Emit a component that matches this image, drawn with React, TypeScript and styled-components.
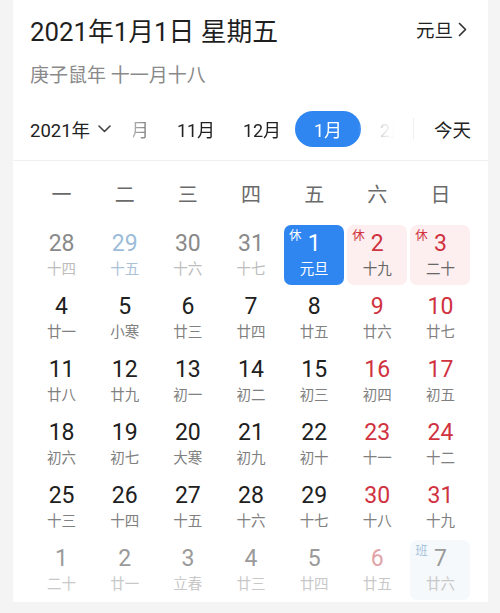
import React from "react";
import styled, { createGlobalStyle } from "styled-components";

const Global = createGlobalStyle`
  html, body { margin: 0; padding: 0; background: #f4f4f4; }
  body { font-family: "Roboto", "Noto Sans CJK SC", "Noto Sans", sans-serif; -webkit-font-smoothing: antialiased; }
`;

const Page = styled.div`
  width: 500px;
  height: 613px;
  overflow: hidden;
  background: #f4f4f4;
  padding: 0 12px 0 13px;
  box-sizing: border-box;
`;

const Card = styled.div`
  background: #ffffff;
  display: flex;
  flex-direction: column;
`;

const Header = styled.div`
  display: flex;
  flex-direction: column;
  padding: 0 17px 11px 17px;
  border-bottom: 1px solid #f0f0f0;
`;

const TitleRow = styled.div`
  height: 58px;
  display: flex;
  align-items: center;
  justify-content: space-between;
`;

const Title = styled.div`
  font-size: 25.8px;
  color: #1f1f1f;
`;

const Holiday = styled.div`
  display: flex;
  align-items: center;
  gap: 5px;
  font-size: 18.5px;
  color: #222;
  margin-right: 4px;
`;

const Sub = styled.div`
  height: 30px;
  display: flex;
  align-items: center;
  font-size: 19px;
  color: #8a8a8a;
`;

const MonthRow = styled.div`
  margin-top: 21px;
  height: 40px;
  display: flex;
  align-items: center;
`;

const YearPick = styled.div`
  display: flex;
  align-items: center;
  gap: 8px;
  font-size: 18.5px;
  color: #222;
  width: 103px;
  flex: none;
`;

const Strip = styled.div`
  width: 262px;
  height: 40px;
  overflow: hidden;
  flex: none;
  -webkit-mask-image: linear-gradient(to right, rgba(0,0,0,0.35) 0px, #000 40px, #000 225px, rgba(0,0,0,0.15) 250px, transparent 262px);
  mask-image: linear-gradient(to right, rgba(0,0,0,0.35) 0px, #000 40px, #000 225px, rgba(0,0,0,0.15) 250px, transparent 262px);
`;

const StripInner = styled.div`
  display: flex;
  margin-left: -36px;
  height: 40px;
`;

const MonthItem = styled.div<{ $active?: boolean }>`
  flex: none;
  width: 66px;
  height: 36px;
  margin-top: 2px;
  border-radius: 18px;
  display: flex;
  align-items: center;
  justify-content: center;
  font-size: 18px;
  color: ${(p) => (p.$active ? "#fff" : "#222")};
  background: ${(p) => (p.$active ? "#2f86f1" : "transparent")};
`;

const Divider = styled.div`
  width: 1px;
  height: 22px;
  background: #f0f0f0;
  margin-left: 18px;
`;

const Today = styled.div`
  margin-left: auto;
  font-size: 18.5px;
  color: #222;
`;

const Grid = styled.div`
  display: grid;
  grid-template-columns: repeat(7, 63.15px);
  grid-auto-rows: 63px;
  padding: 0 16px 0 17px;
`;

const Week = styled.div`
  display: flex;
  align-items: center;
  justify-content: center;
  font-size: 20px;
  color: #6a6a6a;
  padding-top: 1px;
`;

type Kind = "prev" | "cur" | "next";

const Cell = styled.div<{ $bg?: string }>`
  position: relative;
  margin: 1px 1.5px 2px 1.5px;
  border-radius: 7px;
  background: ${(p) => p.$bg || "transparent"};
  display: flex;
  flex-direction: column;
  align-items: center;
`;

const Num = styled.div<{ $color: string }>`
  margin-top: 4px;
  height: 30px;
  line-height: 30px;
  font-size: 23px;
  color: ${(p) => p.$color};
`;

const Lunar = styled.div<{ $color: string }>`
  height: 22px;
  line-height: 22px;
  font-size: 14.5px;
  color: ${(p) => p.$color};
`;

const Tag = styled.span<{ $color: string }>`
  position: absolute;
  left: 5px;
  top: 4px;
  font-size: 12.5px;
  line-height: 14px;
  color: ${(p) => p.$color};
`;

type Day = {
  n: number;
  l: string;
  kind: Kind;
  weekend?: boolean;
  num?: string;
  lunar?: string;
  bg?: string;
  tag?: string;
  tagColor?: string;
};

const RED = "#d0323f";

const rows: Day[][] = [
  [
    { n: 28, l: "十四", kind: "prev" },
    { n: 29, l: "十五", kind: "prev", num: "#9cbcd9", lunar: "#a9c2d8" },
    { n: 30, l: "十六", kind: "prev" },
    { n: 31, l: "十七", kind: "prev" },
    { n: 1, l: "元旦", kind: "cur", num: "#fff", lunar: "#fff", bg: "#2f86f1", tag: "休", tagColor: "#fff" },
    { n: 2, l: "十九", kind: "cur", weekend: true, bg: "#fdeef0", tag: "休", tagColor: RED, lunar: "#666" },
    { n: 3, l: "二十", kind: "cur", weekend: true, bg: "#fdeef0", tag: "休", tagColor: RED, lunar: "#666" },
  ],
  [
    { n: 4, l: "廿一", kind: "cur" },
    { n: 5, l: "小寒", kind: "cur" },
    { n: 6, l: "廿三", kind: "cur" },
    { n: 7, l: "廿四", kind: "cur" },
    { n: 8, l: "廿五", kind: "cur" },
    { n: 9, l: "廿六", kind: "cur", weekend: true },
    { n: 10, l: "廿七", kind: "cur", weekend: true },
  ],
  [
    { n: 11, l: "廿八", kind: "cur" },
    { n: 12, l: "廿九", kind: "cur" },
    { n: 13, l: "初一", kind: "cur" },
    { n: 14, l: "初二", kind: "cur" },
    { n: 15, l: "初三", kind: "cur" },
    { n: 16, l: "初四", kind: "cur", weekend: true },
    { n: 17, l: "初五", kind: "cur", weekend: true },
  ],
  [
    { n: 18, l: "初六", kind: "cur" },
    { n: 19, l: "初七", kind: "cur" },
    { n: 20, l: "大寒", kind: "cur" },
    { n: 21, l: "初九", kind: "cur" },
    { n: 22, l: "初十", kind: "cur" },
    { n: 23, l: "十一", kind: "cur", weekend: true },
    { n: 24, l: "十二", kind: "cur", weekend: true },
  ],
  [
    { n: 25, l: "十三", kind: "cur" },
    { n: 26, l: "十四", kind: "cur" },
    { n: 27, l: "十五", kind: "cur" },
    { n: 28, l: "十六", kind: "cur" },
    { n: 29, l: "十七", kind: "cur" },
    { n: 30, l: "十八", kind: "cur", weekend: true },
    { n: 31, l: "十九", kind: "cur", weekend: true },
  ],
  [
    { n: 1, l: "二十", kind: "next" },
    { n: 2, l: "廿一", kind: "next" },
    { n: 3, l: "立春", kind: "next" },
    { n: 4, l: "廿三", kind: "next" },
    { n: 5, l: "廿四", kind: "next" },
    { n: 6, l: "廿五", kind: "next", num: "#e2a3a8" },
    { n: 7, l: "廿六", kind: "next", bg: "#f6f9fc", tag: "班", tagColor: "#a6c4dc" },
  ],
];

const numColor = (d: Day) => {
  if (d.num) return d.num;
  if (d.kind === "prev") return "#8a8a8a";
  if (d.kind === "next") return "#9a9a9a";
  return d.weekend ? RED : "#202020";
};

const lunarColor = (d: Day) => {
  if (d.lunar) return d.lunar;
  if (d.kind === "prev") return "#bdbdbd";
  if (d.kind === "next") return "#c8c8c8";
  return "#808080";
};

const ChevronDown = () => (
  <svg width="13" height="8" viewBox="0 0 13 8" fill="none">
    <polyline points="1,1 6.5,6.5 12,1" stroke="#444" strokeWidth="1.6" strokeLinecap="round" strokeLinejoin="round" />
  </svg>
);

const ChevronRight = () => (
  <svg width="9" height="15" viewBox="0 0 9 15" fill="none">
    <polyline points="1.5,1.5 7.5,7.5 1.5,13.5" stroke="#333" strokeWidth="1.7" strokeLinecap="round" strokeLinejoin="round" />
  </svg>
);

export default function App() {
  const weeks = ["一", "二", "三", "四", "五", "六", "日"];
  const months = ["10月", "11月", "12月", "1月", "2月"];
  return (
    <Page>
      <Global />
      <Card>
        <Header>
          <TitleRow>
            <Title>2021年1月1日 星期五</Title>
            <Holiday>
              元旦
              <ChevronRight />
            </Holiday>
          </TitleRow>
          <Sub>庚子鼠年 十一月十八</Sub>
          <MonthRow>
            <YearPick>
              2021年
              <ChevronDown />
            </YearPick>
            <Strip>
              <StripInner>
                {months.map((m) => (
                  <MonthItem key={m} $active={m === "1月"}>
                    {m}
                  </MonthItem>
                ))}
              </StripInner>
            </Strip>
            <Divider />
            <Today>今天</Today>
          </MonthRow>
        </Header>
        <Grid>
          {weeks.map((w) => (
            <Week key={w}>{w}</Week>
          ))}
          {rows.flat().map((d, i) => (
            <Cell key={i} $bg={d.bg}>
              {d.tag && <Tag $color={d.tagColor || "#fff"}>{d.tag}</Tag>}
              <Num $color={numColor(d)}>{d.n}</Num>
              <Lunar $color={lunarColor(d)}>{d.l}</Lunar>
            </Cell>
          ))}
        </Grid>
      </Card>
    </Page>
  );
}
